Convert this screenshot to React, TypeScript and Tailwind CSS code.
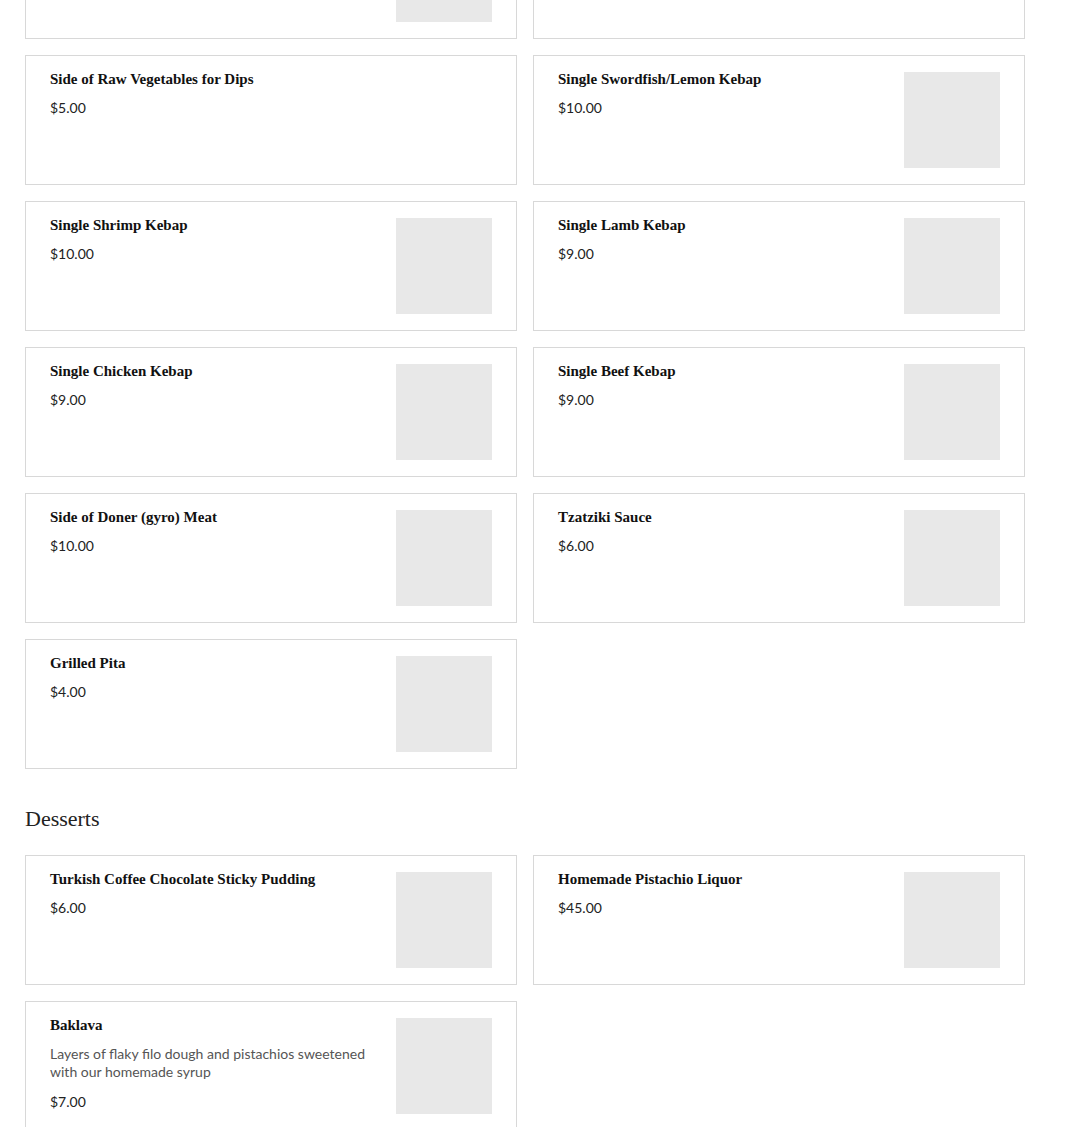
import React from "react";

type Item = {
  name: string;
  price: string;
  description?: string;
  image?: boolean;
};

const sides: Item[] = [
  { name: "", price: "", image: true },
  { name: "", price: "", image: false },
  { name: "Side of Raw Vegetables for Dips", price: "$5.00", image: false },
  { name: "Single Swordfish/Lemon Kebap", price: "$10.00", image: true },
  { name: "Single Shrimp Kebap", price: "$10.00", image: true },
  { name: "Single Lamb Kebap", price: "$9.00", image: true },
  { name: "Single Chicken Kebap", price: "$9.00", image: true },
  { name: "Single Beef Kebap", price: "$9.00", image: true },
  { name: "Side of Doner (gyro) Meat", price: "$10.00", image: true },
  { name: "Tzatziki Sauce", price: "$6.00", image: true },
  { name: "Grilled Pita", price: "$4.00", image: true },
];

const desserts: Item[] = [
  { name: "Turkish Coffee Chocolate Sticky Pudding", price: "$6.00", image: true },
  { name: "Homemade Pistachio Liquor", price: "$45.00", image: true },
  {
    name: "Baklava",
    price: "$7.00",
    description: "Layers of flaky filo dough and pistachios sweetened with our homemade syrup",
    image: true,
  },
];

const MenuCard: React.FC<{ item: Item }> = ({ item }) => (
  <div className="flex min-h-[130px] gap-4 border border-[#d8d8d8] bg-white px-6 py-4">
    <div className="flex-1 min-w-0">
      {item.name && (
        <h3 className="text-[15px] font-bold leading-[15px] text-[#111] [font-family:'Liberation_Serif','Times_New_Roman',serif]">
          {item.name}
        </h3>
      )}
      {item.description && (
        <p className="mt-[12px] text-[14px] leading-[18px] text-[#555] [font-family:Lato,'Open_Sans',sans-serif]">
          {item.description}
        </p>
      )}
      {item.price && (
        <p className="mt-[11px] text-[14px] leading-[20px] text-[#222] [font-family:Lato,'Open_Sans',sans-serif]">
          {item.price}
        </p>
      )}
    </div>
    {item.image && <div className="h-24 w-24 shrink-0 bg-[#e8e8e8]" />}
  </div>
);

export default function App() {
  return (
    <div className="min-h-screen bg-white px-[25px]">
      <div className="w-[1000px] -mt-[91px]">
        <div className="grid grid-cols-2 gap-4">
          {sides.map((item, i) => (
            <MenuCard key={i} item={item} />
          ))}
        </div>

        <h2 className="mt-[36px] mb-[22px] text-[22px] leading-[28px] text-[#222] [font-family:'Liberation_Serif','Times_New_Roman',serif]">
          Desserts
        </h2>

        <div className="grid grid-cols-2 gap-4 items-start">
          {desserts.map((item, i) => (
            <MenuCard key={i} item={item} />
          ))}
        </div>
      </div>
    </div>
  );
}
